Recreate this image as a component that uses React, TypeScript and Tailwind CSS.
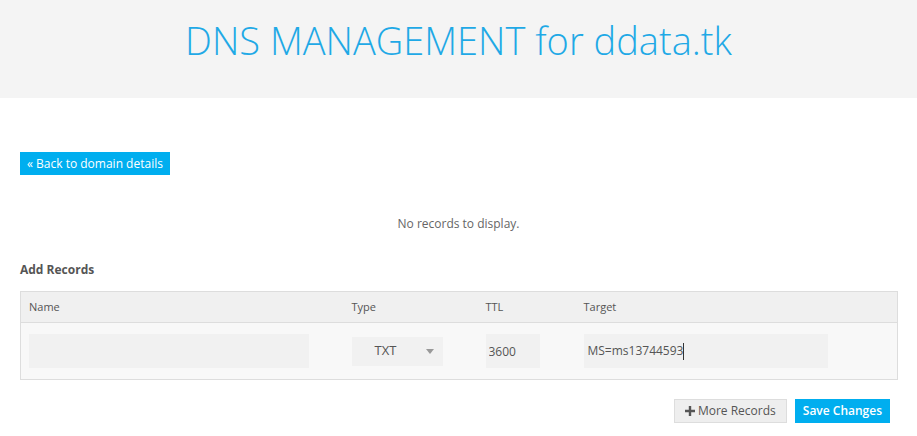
import React, { useState } from 'react';

const FONT = { fontFamily: '"Open Sans", "Liberation Sans", sans-serif' };

export default function App() {
  const [name, setName] = useState('');
  const [type, setType] = useState('TXT');
  const [ttl, setTtl] = useState('3600');
  const [target, setTarget] = useState('MS=ms13744593');

  return (
    <div className="min-h-[436px] bg-white text-[12px] text-[#555]" style={FONT}>
      {/* Header */}
      <div className="h-[98px] bg-[#f4f4f4] flex justify-center pt-[14px]">
        <h1 className="text-[38px] font-light text-[#1fa9e6] leading-[52px]">
          DNS MANAGEMENT for ddata.tk
        </h1>
      </div>

      <div className="px-5">
        <div className="pt-[54px]">
          <button className="h-[23px] px-[7px] bg-[#00aeef] text-white text-[12px] leading-[23px]">
            « Back to domain details
          </button>
        </div>

        <p className="text-center text-[#666] mt-[40px] leading-[18px]">No records to display.</p>

        <h3 className="font-bold text-[#555] mt-[28px] leading-[18px]">Add Records</h3>

        <table className="mt-[12px] w-[878px] table-fixed border border-[#ddd] border-collapse">
          <colgroup>
            <col className="w-[323px]" />
            <col className="w-[134px]" />
            <col className="w-[98px]" />
            <col />
          </colgroup>
          <thead>
            <tr className="bg-[#f0f0f0] h-[31px] border-b border-[#ddd]">
              <th className="text-left font-normal px-2 text-[11px] text-[#555]">Name</th>
              <th className="text-left font-normal px-2 text-[11px] text-[#555]">Type</th>
              <th className="text-left font-normal px-2 text-[11px] text-[#555]">TTL</th>
              <th className="text-left font-normal px-2 text-[11px] text-[#555]">Target</th>
            </tr>
          </thead>
          <tbody>
            <tr className="bg-[#f8f8f8] h-[57px]">
              <td className="px-2">
                <input
                  value={name}
                  onChange={(e) => setName(e.target.value)}
                  className="w-[280px] h-[34px] bg-[#f1f1f1] px-2 outline-none text-[12px]"
                />
              </td>
              <td className="px-2">
                <div className="relative w-[91px] h-[29px] bg-[#f1f1f1] flex items-center">
                  <span className="pl-[23px] text-[#555] text-[13px]">{type}</span>
                  <svg className="absolute right-[9px] top-[12px]" width="8" height="5" viewBox="0 0 8 5">
                    <path d="M0 0h8L4 5z" fill="#999" />
                  </svg>
                  <select
                    value={type}
                    onChange={(e) => setType(e.target.value)}
                    className="absolute inset-0 opacity-0"
                  >
                    <option>A</option>
                    <option>AAAA</option>
                    <option>CNAME</option>
                    <option>MX</option>
                    <option>TXT</option>
                  </select>
                </div>
              </td>
              <td className="px-2">
                <input
                  value={ttl}
                  onChange={(e) => setTtl(e.target.value)}
                  className="w-[54px] h-[34px] bg-[#f1f1f1] px-[3px] outline-none text-[12px] text-[#555]"
                />
              </td>
              <td className="px-2">
                <div className="w-[244px] h-[34px] bg-[#f1f1f1] px-[4px] flex items-center">
                  <input
                    value={target}
                    onChange={(e) => setTarget(e.target.value)}
                    className="w-auto bg-transparent outline-none text-[12px] text-[#555] [field-sizing:content]"
                  />
                  <span className="w-px h-[17px] bg-[#333]" />
                </div>
              </td>
            </tr>
          </tbody>
        </table>

        <div className="w-[870px] flex justify-end gap-2 mt-[19px]">
          <button className="h-[24px] px-[10px] bg-[#eee] border border-[#ddd] text-[#555] flex items-center gap-[3px] leading-none">
            <svg width="10" height="10" viewBox="0 0 10 10">
              <path d="M3.8 0h2.4v3.8H10v2.4H6.2V10H3.8V6.2H0V3.8h3.8z" fill="#555" />
            </svg>
            More Records
          </button>
          <button className="h-[24px] px-[8px] bg-[#00aeef] text-white font-semibold leading-none">
            Save Changes
          </button>
        </div>
      </div>
    </div>
  );
}
